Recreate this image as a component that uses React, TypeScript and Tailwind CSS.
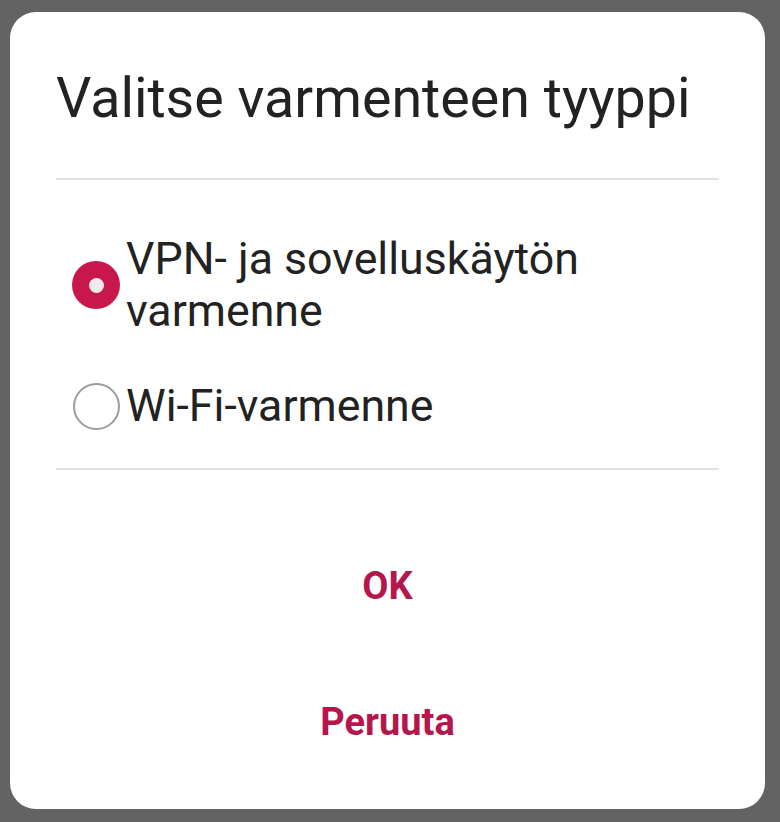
import React from "react";

export default function App() {
  return (
    <div
      className="w-[780px] h-[822px] bg-[#636363] pt-[12px] pl-[10px] pr-[15px] pb-[13px]"
      style={{ fontFamily: "Roboto, 'Noto Sans', sans-serif" }}
    >
      <div className="w-full h-full bg-white rounded-[26px] flex flex-col px-[46px] pt-[54px]">
        <div className="text-[55.6px] leading-[64px] text-[#222222] whitespace-nowrap">
          Valitse varmenteen tyyppi
        </div>
        <div className="mt-[48px] h-[2px] bg-[#e2e2e2]" />
        <div className="flex flex-col pt-[53px] pb-[36px] gap-[43px]">
          <div className="flex items-center">
            <div className="w-[48px] h-[48px] shrink-0 ml-[16px] rounded-full bg-[#c8174b] flex items-center justify-center">
              <div className="w-[15px] h-[15px] rounded-full bg-[#f1eaec]" />
            </div>
            <div className="ml-[6px] text-[44.7px] leading-[52px] text-[#222222]">
              VPN- ja sovelluskäytön varmenne
            </div>
          </div>
          <div className="flex items-center">
            <div className="w-[48px] h-[48px] shrink-0 ml-[16px] flex items-center justify-center">
              <div className="w-[47px] h-[47px] rounded-full border-[2.5px] border-[#9c9c9c]" />
            </div>
            <div className="ml-[6px] text-[44.7px] leading-[52px] text-[#222222]">
              Wi-Fi-varmenne
            </div>
          </div>
        </div>
        <div className="h-[2px] bg-[#e2e2e2]" />
        <div className="mt-[48px] flex flex-col">
          <div className="h-[136px] flex items-center justify-center text-[38px] font-bold text-[#b3174b]">
            OK
          </div>
          <div className="h-[136px] flex items-center justify-center text-[38px] font-bold text-[#b3174b]">
            Peruuta
          </div>
        </div>
      </div>
    </div>
  );
}
